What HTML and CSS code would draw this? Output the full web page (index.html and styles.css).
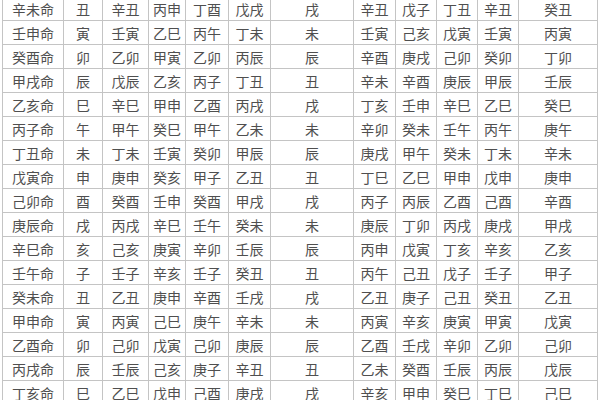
FILE: index.html
```html
<!DOCTYPE html>
<html lang="zh">
<head>
<meta charset="utf-8">
<title>纳音表</title>
<link rel="stylesheet" href="styles.css">
</head>
<body>
<table class="chart">
<colgroup>
<col class="c-ming"><col class="c-zhi"><col class="c-a"><col class="c-b"><col class="c-c"><col class="c-d"><col class="c-gap"><col class="c-e"><col class="c-f"><col class="c-g"><col class="c-h"><col class="c-last">
</colgroup>
<tbody>
<tr><td>辛未命</td><td>丑</td><td>辛丑</td><td>丙申</td><td>丁酉</td><td>戊戌</td><td>戌</td><td>辛丑</td><td>戊子</td><td>丁丑</td><td>辛丑</td><td>癸丑</td></tr>
<tr><td>壬申命</td><td>寅</td><td>壬寅</td><td>乙巳</td><td>丙午</td><td>丁未</td><td>未</td><td>壬寅</td><td>己亥</td><td>戊寅</td><td>壬寅</td><td>丙寅</td></tr>
<tr><td>癸酉命</td><td>卯</td><td>乙卯</td><td>甲寅</td><td>乙卯</td><td>丙辰</td><td>辰</td><td>辛酉</td><td>庚戌</td><td>己卯</td><td>癸卯</td><td>丁卯</td></tr>
<tr><td>甲戌命</td><td>辰</td><td>戊辰</td><td>乙亥</td><td>丙子</td><td>丁丑</td><td>丑</td><td>辛未</td><td>辛酉</td><td>庚辰</td><td>甲辰</td><td>壬辰</td></tr>
<tr><td>乙亥命</td><td>巳</td><td>辛巳</td><td>甲申</td><td>乙酉</td><td>丙戌</td><td>戌</td><td>丁亥</td><td>壬申</td><td>辛巳</td><td>乙巳</td><td>癸巳</td></tr>
<tr><td>丙子命</td><td>午</td><td>甲午</td><td>癸巳</td><td>甲午</td><td>乙未</td><td>未</td><td>辛卯</td><td>癸未</td><td>壬午</td><td>丙午</td><td>庚午</td></tr>
<tr><td>丁丑命</td><td>未</td><td>丁未</td><td>壬寅</td><td>癸卯</td><td>甲辰</td><td>辰</td><td>庚戌</td><td>甲午</td><td>癸未</td><td>丁未</td><td>辛未</td></tr>
<tr><td>戊寅命</td><td>申</td><td>庚申</td><td>癸亥</td><td>甲子</td><td>乙丑</td><td>丑</td><td>丁巳</td><td>乙巳</td><td>甲申</td><td>戊申</td><td>庚申</td></tr>
<tr><td>己卯命</td><td>酉</td><td>癸酉</td><td>壬申</td><td>癸酉</td><td>甲戌</td><td>戌</td><td>丙子</td><td>丙辰</td><td>乙酉</td><td>己酉</td><td>辛酉</td></tr>
<tr><td>庚辰命</td><td>戌</td><td>丙戌</td><td>辛巳</td><td>壬午</td><td>癸未</td><td>未</td><td>庚辰</td><td>丁卯</td><td>丙戌</td><td>庚戌</td><td>甲戌</td></tr>
<tr><td>辛巳命</td><td>亥</td><td>己亥</td><td>庚寅</td><td>辛卯</td><td>壬辰</td><td>辰</td><td>丙申</td><td>戊寅</td><td>丁亥</td><td>辛亥</td><td>乙亥</td></tr>
<tr><td>壬午命</td><td>子</td><td>壬子</td><td>辛亥</td><td>壬子</td><td>癸丑</td><td>丑</td><td>丙午</td><td>己丑</td><td>戊子</td><td>壬子</td><td>甲子</td></tr>
<tr><td>癸未命</td><td>丑</td><td>乙丑</td><td>庚申</td><td>辛酉</td><td>壬戌</td><td>戌</td><td>乙丑</td><td>庚子</td><td>己丑</td><td>癸丑</td><td>乙丑</td></tr>
<tr><td>甲申命</td><td>寅</td><td>丙寅</td><td>己巳</td><td>庚午</td><td>辛未</td><td>未</td><td>丙寅</td><td>辛亥</td><td>庚寅</td><td>甲寅</td><td>戊寅</td></tr>
<tr><td>乙酉命</td><td>卯</td><td>己卯</td><td>戊寅</td><td>己卯</td><td>庚辰</td><td>辰</td><td>乙酉</td><td>壬戌</td><td>辛卯</td><td>乙卯</td><td>己卯</td></tr>
<tr><td>丙戌命</td><td>辰</td><td>壬辰</td><td>己亥</td><td>庚子</td><td>辛丑</td><td>丑</td><td>乙未</td><td>癸酉</td><td>壬辰</td><td>丙辰</td><td>戊辰</td></tr>
<tr><td>丁亥命</td><td>巳</td><td>乙巳</td><td>戊申</td><td>己酉</td><td>庚戌</td><td>戌</td><td>辛亥</td><td>甲申</td><td>癸巳</td><td>丁巳</td><td>己巳</td></tr>
</tbody>
</table>
</body>
</html>
```

FILE: styles.css
```css
html, body {
  margin: 0;
  padding: 0;
  background: #ffffff;
  overflow: hidden;
}

body {
  width: 600px;
  height: 400px;
}

.chart {
  margin: -4px 0 0 2px;
  width: 596px;
  table-layout: fixed;
  border-collapse: collapse;
  font-family: "Noto Sans CJK SC", "Noto Sans CJK TC", sans-serif;
  font-size: 14px;
  color: #4f4f4f;
}

.chart td {
  height: 23px;
  padding: 0;
  border: 1px solid #c4c4c4;
  text-align: center;
  vertical-align: middle;
  line-height: 16px;
  white-space: nowrap;
  overflow: hidden;
}

.c-ming { width: 61px; }
.c-zhi { width: 39px; }
.c-a { width: 46px; }
.c-b { width: 37px; }
.c-c { width: 43px; }
.c-d { width: 42px; }
.c-gap { width: 83px; }
.c-e { width: 42px; }
.c-f { width: 41px; }
.c-g { width: 41px; }
.c-h { width: 41px; }
.c-last { width: 79px; }
```
